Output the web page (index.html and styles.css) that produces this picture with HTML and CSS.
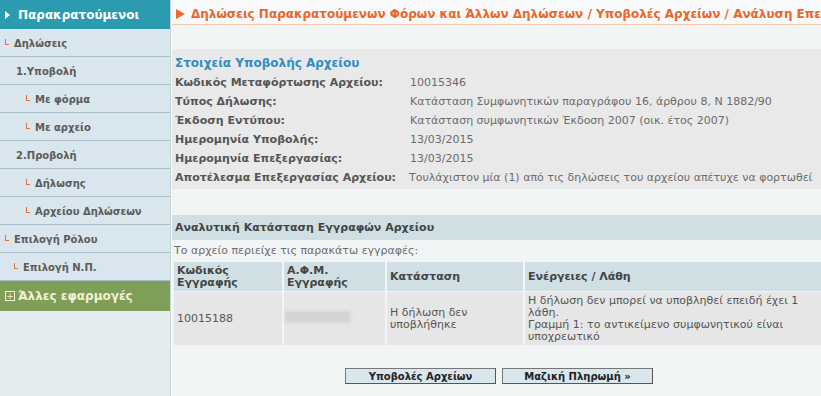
FILE: index.html
```html
<!DOCTYPE html>
<html lang="el">
<head>
<meta charset="utf-8">
<title>Ανάλυση Επεξεργασίας</title>
<link rel="stylesheet" href="styles.css">
</head>
<body>
<div class="page">
  <nav class="sidebar">
    <div class="side-head"><span class="tri-white"></span>Παρακρατούμενοι</div>
    <a class="side-item lvl0"><span class="ell"></span>Δηλώσεις</a>
    <a class="side-item lvl1">1.Υποβολή</a>
    <a class="side-item lvl2"><span class="ell"></span>Με φόρμα</a>
    <a class="side-item lvl2"><span class="ell"></span>Με αρχείο</a>
    <a class="side-item lvl1">2.Προβολή</a>
    <a class="side-item lvl2"><span class="ell"></span>Δήλωσης</a>
    <a class="side-item lvl2"><span class="ell"></span>Αρχείου Δηλώσεων</a>
    <a class="side-item lvl0"><span class="ell"></span>Επιλογή Ρόλου</a>
    <a class="side-item lvl1b"><span class="ell"></span>Επιλογή Ν.Π.</a>
    <div class="side-green"><span class="plus-box">+</span>Άλλες εφαρμογές</div>
  </nav>
  <main class="main">
    <h1 class="crumb"><span class="tri-orange"></span><span class="crumb-text">Δηλώσεις Παρακρατούμενων Φόρων και Άλλων Δηλώσεων / Υποβολές Αρχείων / Ανάλυση Επεξεργασίας</span></h1>
    <section class="info">
      <h2 class="info-title">Στοιχεία Υποβολής Αρχείου</h2>
      <div class="info-grid">
        <div class="lbl">Κωδικός Μεταφόρτωσης Αρχείου:</div><div class="val">10015346</div>
        <div class="lbl">Τύπος Δήλωσης:</div><div class="val">Κατάσταση Συμφωνητικών παραγράφου 16, άρθρου 8, Ν 1882/90</div>
        <div class="lbl">Έκδοση Εντύπου:</div><div class="val">Κατάσταση συμφωνητικών Έκδοση 2007 (οικ. έτος 2007)</div>
        <div class="lbl">Ημερομηνία Υποβολής:</div><div class="val">13/03/2015</div>
        <div class="lbl">Ημερομηνία Επεξεργασίας:</div><div class="val">13/03/2015</div>
        <div class="lbl">Αποτέλεσμα Επεξεργασίας Αρχείου:</div><div class="val last">Τουλάχιστον μία (1) από τις δηλώσεις του αρχείου απέτυχε να φορτωθεί</div>
      </div>
    </section>
    <section class="detail">
      <h2 class="detail-title">Αναλυτική Κατάσταση Εγγραφών Αρχείου</h2>
      <p class="intro">Το αρχείο περιείχε τις παρακάτω εγγραφές:</p>
      <table class="rec">
        <thead>
          <tr>
            <th class="c1">Κωδικός<br>Εγγραφής</th>
            <th class="c2">Α.Φ.Μ.<br>Εγγραφής</th>
            <th class="c3">Κατάσταση</th>
            <th class="c4">Ενέργειες / Λάθη</th>
          </tr>
        </thead>
        <tbody>
          <tr>
            <td>10015188</td>
            <td><span class="blur"></span></td>
            <td>Η δήλωση δεν<br>υποβλήθηκε</td>
            <td>Η δήλωση δεν μπορεί να υποβληθεί επειδή έχει 1 λάθη.<br>Γραμμή 1: το αντικείμενο συμφωνητικού είναι υποχρεωτικό</td>
          </tr>
        </tbody>
      </table>
      <div class="buttons">
        <button class="btn">Υποβολές Αρχείων</button>
        <button class="btn">Μαζική Πληρωμή »</button>
      </div>
    </section>
  </main>
</div>
</body>
</html>
```
FILE: styles.css
```css
html, body {
  margin: 0;
  padding: 0;
  overflow: hidden;
  background: #f2f5f6;
}
body {
  font-family: "DejaVu Sans", Verdana, sans-serif;
  font-size: 11px;
  color: #5a5a5a;
}
.page {
  display: flex;
  width: 821px;
  height: 396px;
  overflow: hidden;
}
.sidebar {
  width: 170px;
  flex: none;
  background: #e5ecef;
  border-right: 1px solid #c9d6dc;
  display: flex;
  flex-direction: column;
}
.side-head {
  height: 29px;
  background: #2b9bb0;
  color: #fff;
  font-weight: bold;
  font-size: 12px;
  display: flex;
  align-items: center;
  padding-left: 5px;
  box-sizing: border-box;
}
.tri-white {
  width: 0;
  height: 0;
  border-left: 5px solid #fff;
  border-top: 4px solid transparent;
  border-bottom: 4px solid transparent;
  margin-right: 8px;
}
.side-item {
  height: 28px;
  box-sizing: border-box;
  background: #d9e6ed;
  border-bottom: 1px solid #a9bdc8;
  display: flex;
  align-items: center;
  font-weight: bold;
  font-size: 10px;
  color: #5b5b5b;
  padding-top: 1px;
}
.lvl0 { padding-left: 5px; }
.lvl1 { padding-left: 16px; }
.lvl1b { padding-left: 14px; }
.lvl2 { padding-left: 26px; }
.ell {
  width: 3px;
  height: 5px;
  border-left: 1px solid #e6703a;
  border-bottom: 1px solid #e6703a;
  margin-right: 5px;
  margin-top: -3px;
}
.side-green {
  height: 30px;
  background: #7f9e58;
  color: #f3f0d6;
  font-weight: bold;
  font-size: 12px;
  display: flex;
  align-items: center;
  padding-left: 5px;
  box-sizing: border-box;
}
.plus-box {
  width: 8px;
  height: 8px;
  border: 1px solid #f3f0d6;
  font-size: 9px;
  line-height: 8px;
  text-align: center;
  margin-right: 3px;
  font-weight: normal;
}
.main {
  flex: 1;
  min-width: 0;
  border-left: 1px solid #f6f8f9;
}
.crumb {
  margin: 0;
  height: 25px;
  box-sizing: border-box;
  border-bottom: 1px solid #f0c7a6;
  color: #e8672b;
  font-size: 12px;
  font-weight: bold;
  white-space: nowrap;
  display: flex;
  align-items: center;
  padding-left: 4px;
  padding-top: 3px;
  background: #f7f9fa;
  overflow: hidden;
}
.crumb-text {
  overflow: hidden;
}
.tri-orange {
  flex: none;
  width: 0;
  height: 0;
  border-left: 9px solid #ec6a2a;
  border-top: 5px solid transparent;
  border-bottom: 5px solid transparent;
  margin-right: 6px;
}
.info {
  margin-top: 24px;
  background: #e9e9e9;
  padding: 6px 0 2px 3px;
}
.info-title {
  margin: 0 0 1px;
  font-size: 12px;
  font-weight: bold;
  color: #2e8ec4;
  line-height: 17px;
}
.info-grid {
  display: grid;
  grid-template-columns: 235px auto;
  line-height: 19px;
  white-space: nowrap;
}
.lbl {
  font-weight: bold;
  color: #555;
}
.val {
  color: #6b6b6b;
  overflow: hidden;
}
.val.last { margin-left: -1px; }
.detail {
  margin-top: 26px;
}
.detail-title {
  margin: 0;
  height: 25px;
  background: #cfdfe3;
  font-size: 11px;
  font-weight: bold;
  color: #444;
  display: flex;
  align-items: center;
  padding-left: 3px;
}
.intro {
  margin: 0;
  padding-left: 2px;
  line-height: 21px;
  color: #6b6b6b;
}
.rec {
  border-collapse: separate;
  border-spacing: 2px 1px;
  margin-left: 0;
  width: 662px;
}
.rec th {
  background: #cfdfe3;
  color: #444;
  font-weight: bold;
  text-align: left;
  vertical-align: middle;
  height: 29px;
  padding: 0 3px;
  line-height: 12px;
}
.rec td {
  background: #e6e6e6;
  vertical-align: middle;
  height: 53px;
  padding: 0 3px;
  line-height: 12px;
  color: #555;
}
.c1 { width: 102px; }
.c2 { width: 95px; }
.c3 { width: 130px; }
.blur {
  display: inline-block;
  width: 66px;
  height: 12px;
  background: #d4d4d4;
  border-radius: 3px;
  filter: blur(1.5px);
  margin-left: -2px;
}
.buttons {
  display: flex;
  gap: 6px;
  margin-top: 22px;
  padding-left: 173px;
}
.btn {
  width: 151px;
  height: 16px;
  padding: 0;
  font-family: "DejaVu Sans", Verdana, sans-serif;
  font-size: 10px;
  font-weight: bold;
  color: #222;
  background: #d9e6ee;
  border: 1px solid #555;
  border-top-color: #777;
  border-left-color: #777;
}
```
